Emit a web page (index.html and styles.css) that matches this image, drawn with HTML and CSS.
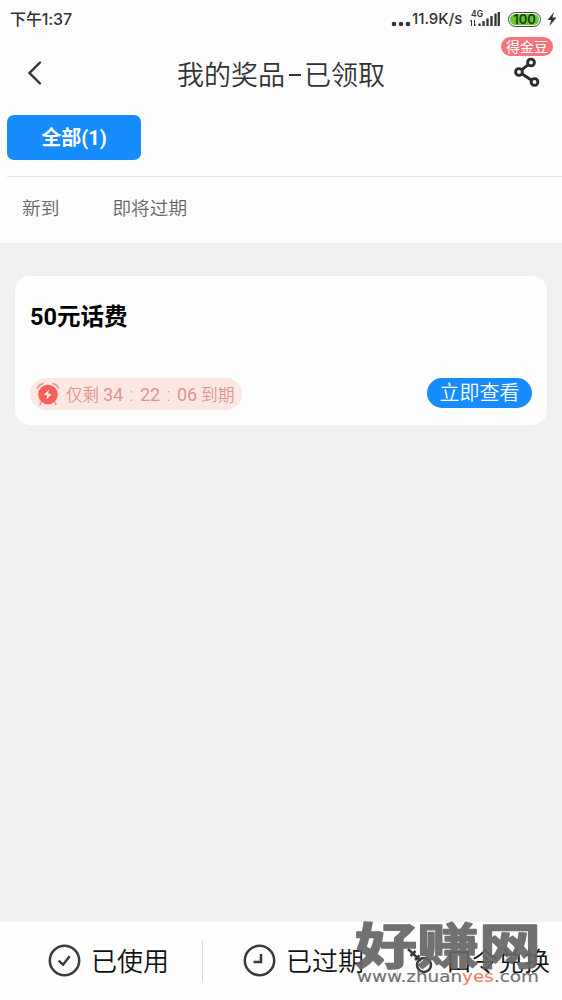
FILE: index.html
```html
<!DOCTYPE html>
<html lang="zh-CN">
<head>
<meta charset="utf-8">
<title>我的奖品</title>
<link rel="stylesheet" href="styles.css">
</head>
<body>
<div class="screen">
  <header class="top">
    <div class="status">
      <span class="time">下午1:37</span>
      <div class="status-right">
        <svg class="dots" width="20" height="6" viewBox="0 0 20 6"><g fill="#333"><circle cx="3" cy="3" r="2.300"/><circle cx="10" cy="3" r="2.300"/><circle cx="17" cy="3" r="2.300"/></g></svg>
        <span class="speed">11.9K/s</span>
        <svg class="signal" width="31" height="20" viewBox="0 0 31 20">
          <text class="net" x="2" y="9" textLength="12">4G</text>
          <path d="M2.500 18v-6M1 13.500 2.500 12M5.500 12v6M7 16.500 5.500 18" stroke="#333" fill="none"/>
          <path d="M10.500 15.500v2.500M14.500 13v5M18.500 10.500V18M22.500 8v10M26.500 5.500V18M29.800 4v14" stroke="#333" stroke-width="2.300" fill="none"/>
        </svg>
        <span class="battery"><span class="level">100</span></span>
        <svg class="bolt" width="10" height="14" viewBox="0 0 10 14"><path d="M7 0 .5 8h3.700L2.500 14 9.500 5.500H5.500z" fill="#333"/></svg>
      </div>
    </div>
    <div class="titlebar">
      <svg class="back" width="16" height="24" viewBox="0 0 16 24"><path d="M14 1.500 3.500 12 14 22.500" fill="none" stroke="#333" stroke-width="2.400" stroke-linecap="round"/></svg>
      <h1 class="title">我的奖品<span class="dash"></span>已领取</h1>
      <div class="share">
        <svg width="28" height="32" viewBox="0 0 28 32"><g fill="none" stroke="#2d2d2d" stroke-width="2.900"><circle cx="18" cy="6.500" r="3.400"/><circle cx="6" cy="16" r="3.400"/><circle cx="21.500" cy="26" r="3.400"/><path d="m9 13.700 6.200-5M9.200 18l9 6"/></g></svg>
        <span class="badge">得金豆</span>
      </div>
    </div>
    <div class="tabs"><span class="tab">全部(1)</span></div>
    <nav class="filters"><span>新到</span><span>即将过期</span></nav>
  </header>
  <main class="content">
    <article class="card">
      <h2 class="prize">50元话费</h2>
      <div class="card-row">
        <div class="countdown">
          <svg width="24" height="24" viewBox="0 0 24 24"><path d="M1.500 6Q3 2.500 7 1.500M17 1.500Q21 2.500 22.500 6M6 19l-2 3.500M18 19l2 3.500" stroke="#d99a96" stroke-width="1.600" fill="none" stroke-linecap="round"/><circle cx="12" cy="12.500" r="9.800" fill="#fb5f59"/><path d="m13 7.500-5 5.300 3.200.8-.7 4 5-5.400-3.200-.8z" fill="#ffeae2"/></svg>
          <span class="left">仅剩</span><span class="num">34</span><span class="colon">:</span><span class="num">22</span><span class="colon">:</span><span class="num">06</span><span class="due">到期</span>
        </div>
        <span class="view">立即查看</span>
      </div>
    </article>
  </main>
  <footer class="bottom">
    <div class="item first"><svg width="34" height="34" viewBox="0 0 34 34"><g fill="none" stroke="#3b3b3b" stroke-width="2.500"><circle cx="17.500" cy="16.500" r="14.700"/><path d="m11.700 16.700 4.300 4 6.700-8.400"/></g></svg><span class="label">已使用</span></div>
    <div class="item second"><svg width="34" height="34" viewBox="0 0 34 34"><g fill="none" stroke="#3b3b3b" stroke-width="2.500"><circle cx="17.500" cy="16.500" r="14.700"/><path d="M19 10v8h-7.500"/></g></svg><span class="label">已过期</span></div>
    <div class="item third"><svg width="34" height="34" viewBox="0 0 34 34"><g fill="none" stroke="#3b3b3b" stroke-width="2.500"><path d="m3 5 13 12M5.500 12l5-5M10 16l4.500-4.500"/><circle cx="19" cy="21" r="7"/></g></svg><span class="label">口令兑换</span></div>
    <svg class="watermark" width="190" height="72" viewBox="0 0 190 72">
      <text class="wm-name" transform="translate(2 48) scale(1.240 1)" textLength="150" lengthAdjust="spacingAndGlyphs">好赚网</text>
      <text class="wm-url" x="4" y="66" textLength="182" lengthAdjust="spacingAndGlyphs">www.zhuan<tspan class="yes">yes</tspan>.com</text>
    </svg>
  </footer>
</div>
</body>
</html>
```
FILE: styles.css
```css
* { box-sizing: border-box; }
body { margin: 0; background: #f1f1f1; color: #333; font-family: Roboto, "Noto Sans CJK SC", sans-serif; }
h1, h2 { margin: 0; font-weight: 400; }
svg { display: block; flex: none; }
.screen { width: 562px; height: 1000px; display: flex; flex-direction: column; overflow: hidden; white-space: nowrap; }
.top { height: 243px; background: #fdfdfd; flex: none; }
.status { height: 38px; padding: 0 5px 0 10px; display: flex; justify-content: space-between; align-items: center; }
.time { font: 500 16px/38px Inter, "Noto Sans CJK SC", sans-serif; letter-spacing: -.1px; }
.status-right { display: flex; align-items: center; }
.dots { margin-top: 9px; }
.speed { width: 52px; font: 500 15px/38px Inter, sans-serif; margin-left: 1px; }
.signal { margin-left: 5px; margin-right: 1px; margin-top: -2px; }
.net { font: 600 8.500px Inter, sans-serif; fill: #333; }
.battery { width: 33px; height: 15px; margin: 0 6px 0 7px; padding: 1px; border: 1.500px solid #444; border-radius: 8px; }
.level { display: block; height: 11px; border-radius: 6px; background: #67c931; color: #183d0b; font: 600 13px/11px Inter, sans-serif; text-align: center; }
.titlebar { height: 76px; display: flex; position: relative; align-items: center; justify-content: center; padding-bottom: 4px; }
.back { position: absolute; left: 26px; top: 23px; }
.title { font-size: 27px; line-height: 40px; font-family: "Noto Sans CJK SC", sans-serif; font-weight: 350; display: flex; align-items: center; }
.dash { width: 12px; height: 2px; background: #333; margin: 2px 3px 0 4px; }
.share { position: absolute; left: 513px; top: 18px; }
.badge { position: absolute; left: -12px; top: -19px; width: 52px; height: 19px; border-radius: 10px; background: #f4757b; color: #fff; font-size: 14px; line-height: 20px; text-align: center; }
.tabs { height: 63px; margin-left: 7px; border-bottom: 1px solid #e6e2df; }
.tab { display: block; position: relative; top: 1px; width: 134px; height: 45px; border-radius: 7px; background: #168cff; color: #fff; font-weight: 700; font-size: 20px; line-height: 46px; text-align: center; }
.filters { display: flex; gap: 53px; padding-left: 22px; font-size: 18.700px; font-weight: 350; line-height: 65px; color: #666; }
.content { flex: 1; padding: 33px 15px; }
.card { height: 149px; border-radius: 15px; background: #fefefe; padding: 24px 15px 15px; display: flex; flex-direction: column; justify-content: space-between; }
.prize { font-size: 23.500px; line-height: 34px; font-weight: 700; color: #000; }
.card-row { display: flex; justify-content: space-between; align-items: center; }
.countdown { display: flex; align-items: center; width: 212px; height: 32px; padding-left: 6px; border-radius: 16px; background: #fce7e3; color: #dc9690; font-size: 18px; font-weight: 350; }
.left { width: 37px; margin-left: 6px; font-size: 16.500px; }
.num { width: 20px; font-weight: 400; }
.colon { width: 17px; text-align: center; }
.due { margin-left: 4px; font-size: 16.800px; }
.view { width: 105px; height: 30px; margin-top: -2px; border-radius: 15px; background: #168cff; color: #fff; font-size: 20px; font-weight: 350; line-height: 30px; text-align: center; }
.bottom { height: 78px; flex: none; background: #fefefe; position: relative; display: flex; align-items: center; color: #111; font-size: 26px; font-weight: 350; }
.item { display: flex; align-items: center; gap: 10px; height: 40px; }
.label { padding-bottom: 4px; }
.first { width: 203px; padding-left: 47px; border-right: 1px solid #d8d8d8; }
.second { width: 195px; padding-left: 39px; border-right: 1px solid #d8d8d8; }
.third { padding-left: 7px; gap: 7px; }
.watermark { position: absolute; left: 353px; top: -6px; opacity: .92; overflow: visible; }
.wm-name { font: 700 49px "Noto Sans CJK SC", sans-serif; fill: #666; stroke: #666; stroke-width: 1.500px; stroke-linejoin: round; }
.wm-url { font: 400 15.500px "DejaVu Sans", sans-serif; fill: #666; stroke: #666; stroke-width: .15px; }
.yes { fill: #f5765b; stroke: #f5765b; }
```
